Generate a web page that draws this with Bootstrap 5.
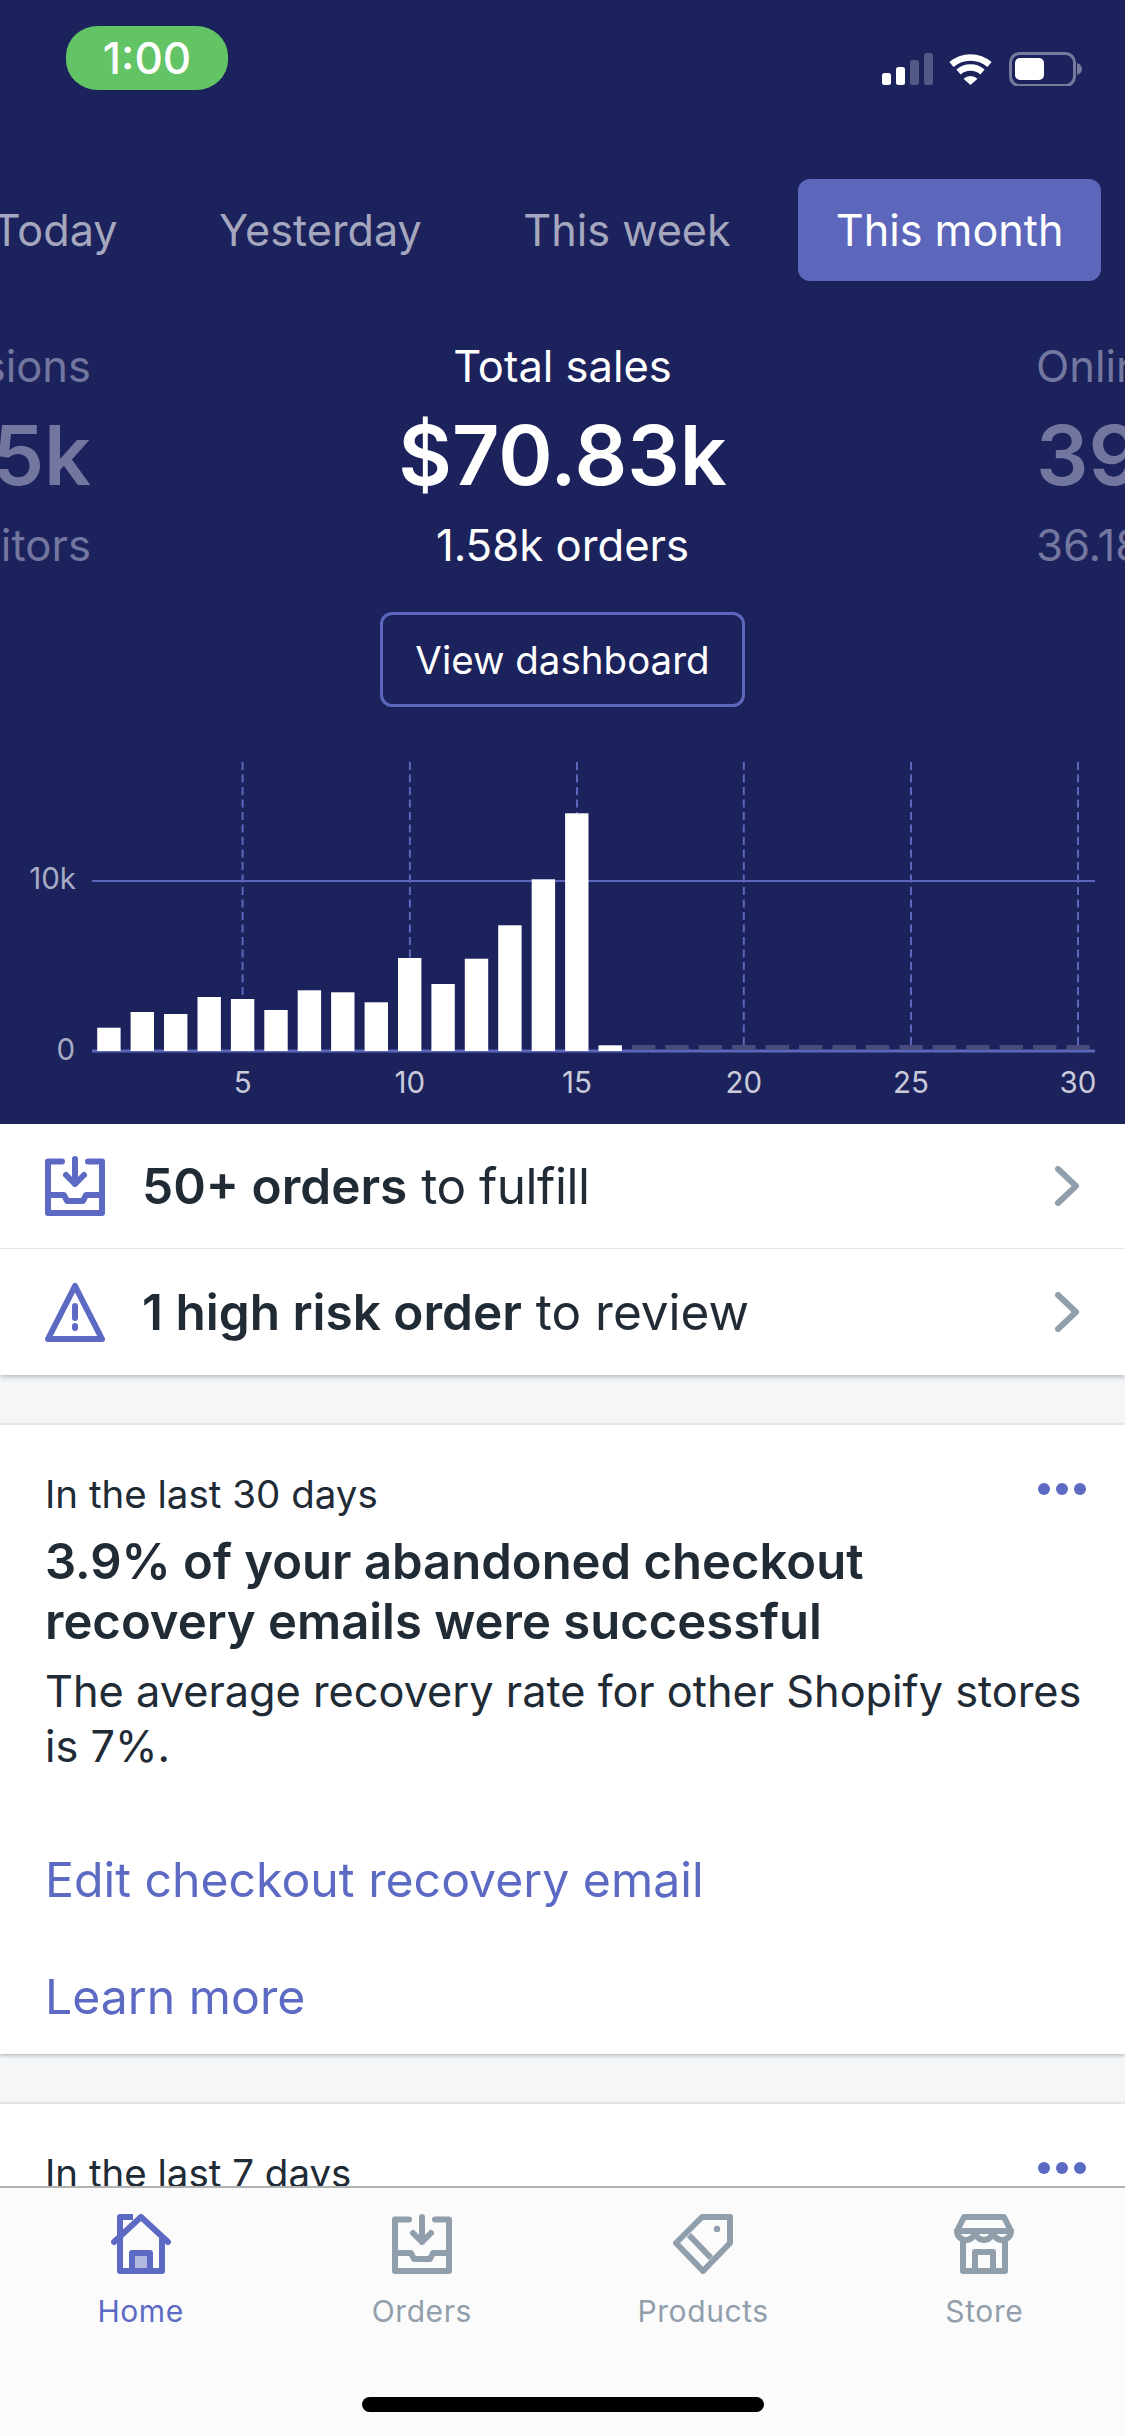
<!DOCTYPE html>
<html lang="en">
<head>
<meta charset="utf-8">
<title>Shopify Home</title>
<link href="https://cdn.jsdelivr.net/npm/bootstrap@5.3.0/dist/css/bootstrap.min.css" rel="stylesheet">
<style>
html,body{height:100%;}
body{font-family:Inter,"Liberation Sans",sans-serif;color:#212b36;background:#f4f6f8;overflow:hidden;}
.screen{height:2436px;}
.hero{background:#1c225c;height:1124px;flex:none;color:#fff;}
.statusline{height:179px;padding:26px 30px 0 66px;}
.clock{width:162px;height:64px;border-radius:32px/30px;background:#63c466;font-size:44px;font-weight:500;line-height:64px;text-align:center;color:#fff;}
.status-icons{margin-top:26px;margin-right:13px;}
.range-tabs{gap:27.500px;padding-right:24px;overflow:hidden;flex-wrap:nowrap;justify-content:flex-end;height:102px;}
.range-tabs .nav-item{flex:none;}
.range-tabs .nav-link{padding:0 37px;height:102px;line-height:102px;font-size:43.200px;color:#a5a7be;border-radius:12px;white-space:nowrap;}
.range-tabs .nav-link.active{background:#5c67bb;color:#fff;padding:0 37.500px;margin-left:3px;}
.metrics{margin-top:55px;gap:263.5px;height:240px;overflow:hidden;}
.metric{flex:0 0 420px;text-align:center;}
.metric-l{text-align:right;color:#73769e;}
.metric-l>div{margin-right:-2px;}
.metric-r{text-align:left;color:#73769e;}
.metric-label{font-size:43.500px;line-height:60px;white-space:nowrap;}
.metric-value{font-size:82.500px;font-weight:600;line-height:100px;margin-top:9px;white-space:nowrap;}
.metric-sub{font-size:43.700px;line-height:60px;margin-top:11px;white-space:nowrap;}
.metric-c{color:#fff;}
.dash-btn{width:365px;height:95px;margin-top:36px;border:3px solid #5c67bb;border-radius:12px;color:#fff;font-size:38.500px;line-height:91px;padding:0;}
.dash-btn:hover{color:#fff;border-color:#5c67bb;}
.chart{display:block;margin-top:33px;}
.chart text{font-family:Inter,"Liberation Sans",sans-serif;font-size:29.500px;}
.todo-list{flex:none;box-shadow:0 2px 5px rgba(99,115,129,.45);position:relative;}
.todo-row{height:125px;padding:0 45px;gap:37px;border:0;border-bottom:2px solid #e3e5e7;font-size:49.500px;color:#212b36;}
.todo-row:last-child{border-bottom:0;height:126px;}
.todo-row b{font-weight:600;}
.todo-tight{letter-spacing:-.5px;}
.chev{margin-left:auto;}
.feed{flex:1 1 0;min-height:0;overflow:hidden;padding-top:48px;}
.feed-card{border:0;border-top:2px solid #e3e5e7;border-radius:0;box-shadow:0 2px 3px rgba(99,115,129,.4);margin-bottom:48px;padding:44px 45px 27px;}
.feed-when{font-size:38.500px;line-height:50px;}
.feed-title{font-size:49px;font-weight:600;line-height:60px;margin:13px 0 12px;}
.feed-body{font-size:43.300px;line-height:55px;margin:0 -12px 0 0;}
.feed-link{display:block;font-size:48.200px;line-height:60px;color:#5c6ac4;text-decoration:none;margin-top:57px;}
.feed-link.first{margin-top:76px;}
.more-dots{position:absolute;top:58px;right:39px;width:48px;height:12px;display:flex;justify-content:space-between;}
.more-dots i{width:12px;height:12px;border-radius:50%;background:#5c6ac4;}
.tabbar{flex:none;height:250px;background:#fbfbfb;border-top:2px solid #b2b2b2;position:relative;padding-top:26px;}
.tab-item{flex:1 1 0;text-align:center;color:#919eab;font-size:30px;letter-spacing:.6px;line-height:36px;}
.tab-item svg{display:block;margin:0 auto 19px;}
.tab-item.on{color:#5c6ac4;}
.home-bar{position:absolute;left:362px;top:209px;width:402px;height:15px;border-radius:8px;background:#000;}
</style>
</head>
<body>
<div class="screen d-flex flex-column">
  <header class="hero">
    <div class="statusline d-flex justify-content-between align-items-start">
      <div class="clock">1:00</div>
      <svg class="status-icons" width="200" height="34" viewBox="882 52 200 34" aria-hidden="true">
        <rect x="882" y="73" width="9" height="12" rx="2.5" fill="#fff"/>
        <rect x="896" y="67" width="9" height="18" rx="2.5" fill="#fff"/>
        <rect x="910" y="60" width="9" height="25" rx="2.5" fill="#fff" opacity=".25"/>
        <rect x="924" y="53" width="9" height="32" rx="2.5" fill="#fff" opacity=".25"/>
        <g fill="none" stroke="#fff" stroke-width="6.5">
          <path d="M951.5 64.5A29 29 0 0 1 989.5 64.5"/>
          <path d="M958.5 72A18 18 0 0 1 982.5 72"/>
        </g>
        <path d="M970.500 85L963.500 78.800A10 10 0 0 1 977.500 78.800Z" fill="#fff"/>
        <rect x="1010.500" y="53.500" width="64" height="32" rx="9" fill="none" stroke="#fff" stroke-opacity=".4" stroke-width="3"/>
        <rect x="1015" y="58" width="29" height="22" rx="5" fill="#fff"/>
        <path d="M1077 63C1080 64 1082 66 1082 69C1082 72 1080 74 1077 75Z" fill="#fff" opacity=".4"/>
      </svg>
    </div>
    <ul class="nav range-tabs">
      <li class="nav-item"><a class="nav-link" href="#">Today</a></li>
      <li class="nav-item"><a class="nav-link" href="#">Yesterday</a></li>
      <li class="nav-item"><a class="nav-link" href="#">This week</a></li>
      <li class="nav-item"><a class="nav-link active" href="#">This month</a></li>
    </ul>
    <div class="metrics d-flex justify-content-center">
      <div class="metric metric-l">
        <div class="metric-label">Sessions</div>
        <div class="metric-value">45k</div>
        <div class="metric-sub">Visitors</div>
      </div>
      <div class="metric metric-c">
        <div class="metric-label">Total sales</div>
        <div class="metric-value">$70.83k</div>
        <div class="metric-sub">1.58k orders</div>
      </div>
      <div class="metric metric-r">
        <div class="metric-label">Online store</div>
        <div class="metric-value">39.52k</div>
        <div class="metric-sub">36.18k orders</div>
      </div>
    </div>
    <div class="text-center"><a class="btn dash-btn" href="#">View dashboard</a></div>
    <svg class="chart" width="1125" height="384" viewBox="0 740 1125 384" role="img" aria-label="Sales per day">
      <g stroke="#5c67bb" stroke-width="2" stroke-dasharray="8 4.500" fill="none">
        <path d="M242.600 762V1051M409.900 762V1051M577 762V1051M743.800 762V1051M911 762V1051M1078 762V1051"/>
      </g>
      <path d="M92 881H1095" stroke="#5c67bb" stroke-width="2"/>
      <path d="M92 1051H1095" stroke="#5c67bb" stroke-width="3"/>
      <g fill="#fff">
        <rect x="97.200" y="1027.700" width="23.400" height="23.300"/>
        <rect x="130.600" y="1012" width="23.400" height="39"/>
        <rect x="164" y="1014" width="23.400" height="37"/>
        <rect x="197.500" y="997" width="23.400" height="54"/>
        <rect x="230.900" y="999" width="23.400" height="52"/>
        <rect x="264.300" y="1010" width="23.400" height="41"/>
        <rect x="297.700" y="990.300" width="23.400" height="60.700"/>
        <rect x="331.100" y="992.300" width="23.400" height="58.700"/>
        <rect x="364.600" y="1002.300" width="23.400" height="48.700"/>
        <rect x="398" y="958" width="23.400" height="93"/>
        <rect x="431.400" y="984" width="23.400" height="67"/>
        <rect x="464.800" y="958.700" width="23.400" height="92.300"/>
        <rect x="498.200" y="925.300" width="23.400" height="125.700"/>
        <rect x="531.700" y="879.300" width="23.400" height="171.700"/>
        <rect x="565.100" y="813.300" width="23.400" height="237.700"/>
        <rect x="598.500" y="1045.300" width="23.400" height="5.700"/>
      </g>
      <g fill="#474c7d">
        <rect x="631.900" y="1045" width="23.400" height="5"/><rect x="665.400" y="1045" width="23.400" height="5"/>
        <rect x="698.800" y="1045" width="23.400" height="5"/><rect x="732.200" y="1045" width="23.400" height="5"/>
        <rect x="765.600" y="1045" width="23.400" height="5"/><rect x="799" y="1045" width="23.400" height="5"/>
        <rect x="832.500" y="1045" width="23.400" height="5"/><rect x="865.900" y="1045" width="23.400" height="5"/>
        <rect x="899.300" y="1045" width="23.400" height="5"/><rect x="932.700" y="1045" width="23.400" height="5"/>
        <rect x="966.100" y="1045" width="23.400" height="5"/><rect x="999.600" y="1045" width="23.400" height="5"/>
        <rect x="1033" y="1045" width="23.400" height="5"/><rect x="1066.400" y="1045" width="23.400" height="5"/>
      </g>
      <g fill="#a8abc4" text-anchor="end">
        <text x="76" y="889">10k</text>
        <text x="75" y="1060">0</text>
      </g>
      <g fill="#c9cbdb" text-anchor="middle">
        <text x="242.600" y="1093">5</text>
        <text x="409.900" y="1093">10</text>
        <text x="577" y="1093">15</text>
        <text x="743.800" y="1093">20</text>
        <text x="911" y="1093">25</text>
        <text x="1078" y="1093">30</text>
      </g>
    </svg>
  </header>

  <div class="list-group list-group-flush todo-list rounded-0">
    <a href="#" class="list-group-item d-flex align-items-center todo-row">
      <svg width="60" height="60" viewBox="0 0 60 60" fill="none" stroke="#5c6ac4" stroke-width="6" stroke-linejoin="round" aria-hidden="true">
        <path d="M17 5.500H3V57H57V5.500H43" stroke-linecap="round"/>
        <path d="M30 3V28M21 19L30 28L39 19M3 39H19L22 45H38L41 39H57" stroke-linecap="round"/>
      </svg>
      <span><b>50+ orders</b> <span class="todo-tight">to fulfill</span></span>
      <svg class="chev" width="26" height="40" viewBox="0 0 26 40" fill="none" stroke="#919eab" stroke-width="6" stroke-linecap="round" stroke-linejoin="round" aria-hidden="true"><path d="M4 3L22 20L4 37"/></svg>
    </a>
    <a href="#" class="list-group-item d-flex align-items-center todo-row">
      <svg width="60" height="60" viewBox="0 0 60 60" fill="none" stroke="#5c6ac4" stroke-width="6" stroke-linejoin="round" aria-hidden="true">
        <path d="M30 4L57 57H3Z"/>
        <path d="M30 24V36M30 44V46" stroke-linecap="round"/>
      </svg>
      <span><b>1 high risk order</b> to review</span>
      <svg class="chev" width="26" height="40" viewBox="0 0 26 40" fill="none" stroke="#919eab" stroke-width="6" stroke-linecap="round" stroke-linejoin="round" aria-hidden="true"><path d="M4 3L22 20L4 37"/></svg>
    </a>
  </div>

  <main class="feed">
    <section class="card feed-card position-relative">
      <div class="more-dots"><i></i><i></i><i></i></div>
      <div class="feed-when">In the last 30 days</div>
      <h2 class="feed-title">3.9% of your abandoned checkout<br>recovery emails were successful</h2>
      <p class="feed-body">The average recovery rate for other Shopify stores is 7%.</p>
      <a class="feed-link first" href="#">Edit checkout recovery email</a>
      <a class="feed-link" href="#">Learn more</a>
    </section>
    <section class="card feed-card position-relative">
      <div class="more-dots"><i></i><i></i><i></i></div>
      <div class="feed-when">In the last 7 days</div>
    </section>
  </main>

  <nav class="tabbar d-flex">
    <div class="tab-item on">
      <svg width="60" height="60" viewBox="0 0 60 60" fill="none" stroke="#5c6ac4" stroke-width="6" stroke-linejoin="round" aria-hidden="true">
        <path d="M3 28L30 3L57 28" stroke-linecap="round"/>
        <path d="M9 22V3H22M9 22V57H51V24"/>
        <rect x="24" y="42" width="12" height="12" fill="#b3b8e0" stroke="none"/>
        <path d="M21 55V39H39V55"/>
      </svg>
      Home
    </div>
    <div class="tab-item">
      <svg width="60" height="60" viewBox="0 0 60 60" fill="none" stroke="#919eab" stroke-width="6" stroke-linejoin="round" aria-hidden="true">
        <path d="M17 5.500H3V57H57V5.500H43" stroke-linecap="round"/>
        <path d="M30 3V28M21 19L30 28L39 19M3 39H19L22 45H38L41 39H57" stroke-linecap="round"/>
      </svg>
      Orders
    </div>
    <div class="tab-item">
      <svg width="60" height="60" viewBox="0 0 60 60" fill="none" stroke="#919eab" stroke-width="6" stroke-linejoin="round" aria-hidden="true">
        <path d="M29 3H57V29L30 57L3 29Z"/>
        <path d="M16 21L38 44"/>
        <circle cx="44" cy="15" r="3.200" fill="#919eab" stroke="none"/>
      </svg>
      Products
    </div>
    <div class="tab-item">
      <svg width="60" height="60" viewBox="0 0 60 60" fill="none" stroke="#919eab" stroke-width="6" stroke-linejoin="round" aria-hidden="true">
        <path d="M10 3H50L57 17H3Z"/>
        <path d="M3 15V17A9 9 0 0 0 21 17A9 9 0 0 0 39 17A9 9 0 0 0 57 17V15"/>
        <path d="M9 27V57H51V27"/>
        <path d="M21 56V38H39V56"/>
      </svg>
      Store
    </div>
    <div class="home-bar"></div>
  </nav>
</div>
<script src="https://cdn.jsdelivr.net/npm/bootstrap@5.3.0/dist/js/bootstrap.bundle.min.js"></script>
</body>
</html>
